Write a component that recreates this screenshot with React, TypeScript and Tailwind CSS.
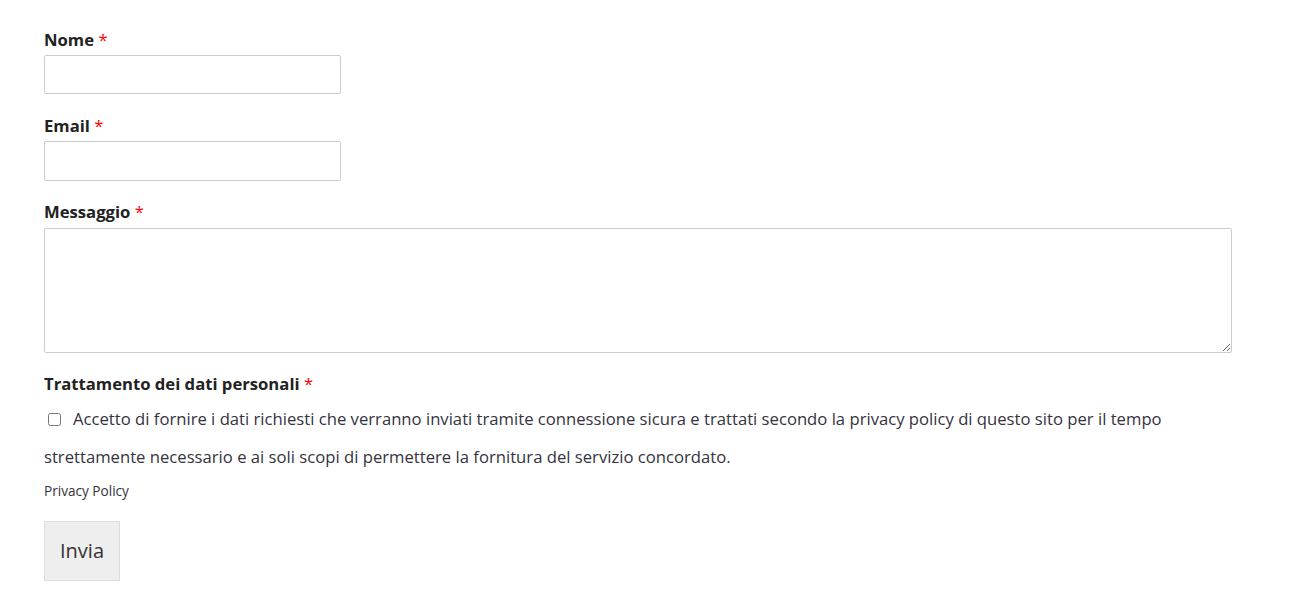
export default function App() {
  const font = { fontFamily: '"Open Sans", "Noto Sans", sans-serif' };
  return (
    <div className="min-h-[615px] w-[1291px] bg-white text-[#333]" style={font}>
      <form className="flex flex-col pl-[44px] pt-[28px] w-[1232px]">
        <label className="text-[16.67px] leading-[24px] font-bold text-[#222]">
          Nome <span className="text-[#f00] font-normal">*</span>
        </label>
        <input className="mt-[3px] h-[39px] w-[297px] border border-[#ccc] rounded-[2px] bg-white" />
        <label className="mt-[20px] text-[16.67px] leading-[24px] font-bold text-[#222]">
          Email <span className="text-[#f00] font-normal">*</span>
        </label>
        <input className="mt-[3px] h-[40px] w-[297px] border border-[#ccc] rounded-[2px] bg-white" />
        <label className="mt-[19px] text-[16.67px] leading-[24px] font-bold text-[#222]">
          Messaggio <span className="text-[#f00] font-normal">*</span>
        </label>
        <textarea className="mt-[4px] h-[125px] w-[1188px] border border-[#ccc] rounded-[2px] bg-white resize-y" />
        <label className="mt-[19px] text-[16.67px] leading-[24px] font-bold text-[#222]">
          Trattamento dei dati personali <span className="text-[#f00] font-normal">*</span>
        </label>
        <p className="mt-[4px] text-[16.67px] leading-[38px] text-[#353340] w-[1180px]">
          <input type="checkbox" className="ml-[4px] mr-[12px] w-[13px] h-[13px] align-[-1px]" />
          Accetto di fornire i dati richiesti che verranno inviati tramite connessione sicura e trattati secondo la privacy policy di questo sito per il tempo strettamente necessario e ai soli scopi di permettere la fornitura del servizio concordato.
        </p>
        <a className="mt-[5px] text-[13.6px] leading-[20px] text-[#353340]">Privacy Policy</a>
        <div className="mt-[20px]">
          <button type="button" className="h-[60px] w-[76px] bg-[#eee] border border-[#ddd] text-[20px] text-[#333]">
            Invia
          </button>
        </div>
      </form>
    </div>
  );
}
